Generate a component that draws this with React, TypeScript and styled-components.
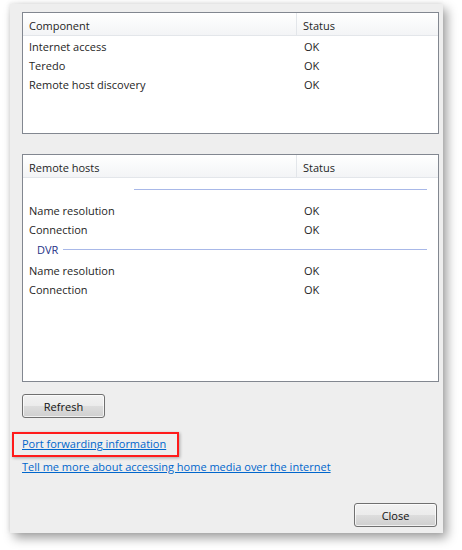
import styled, { createGlobalStyle } from "styled-components";

const GlobalStyle = createGlobalStyle`
  html, body {
    margin: 0;
    padding: 0;
    background: #ffffff;
  }
  body {
    font-family: "Open Sans", "Noto Sans", sans-serif;
    font-size: 11px;
    color: #1e1e1e;
  }
`;

interface Row {
  name: string;
  status: string;
}

const components: Row[] = [
  { name: "Internet access", status: "OK" },
  { name: "Teredo", status: "OK" },
  { name: "Remote host discovery", status: "OK" },
];

const hostGroups: { title: string; rows: Row[] }[] = [
  {
    title: "",
    rows: [
      { name: "Name resolution", status: "OK" },
      { name: "Connection", status: "OK" },
    ],
  },
  {
    title: "DVR",
    rows: [
      { name: "Name resolution", status: "OK" },
      { name: "Connection", status: "OK" },
    ],
  },
];

export default function App() {
  return (
    <>
      <GlobalStyle />
      <Page>
        <Dialog>
          <ListBox $height={122}>
            <Header>
              <HeaderCell $width={274}>Component</HeaderCell>
              <HeaderCell>Status</HeaderCell>
            </Header>
            {components.map((row) => (
              <ItemRow key={row.name}>
                <NameCell>{row.name}</NameCell>
                <StatusCell>{row.status}</StatusCell>
              </ItemRow>
            ))}
          </ListBox>

          <ListBox $height={228} $top={20}>
            <Header>
              <HeaderCell $width={274}>Remote hosts</HeaderCell>
              <HeaderCell>Status</HeaderCell>
            </Header>
            {hostGroups.map((group, i) => (
              <div key={i}>
                <GroupRow $empty={group.title === ""}>
                  {group.title && <GroupTitle>{group.title}</GroupTitle>}
                  <GroupLine />
                </GroupRow>
                {group.rows.map((row) => (
                  <ItemRow key={row.name}>
                    <NameCell>{row.name}</NameCell>
                    <StatusCell>{row.status}</StatusCell>
                  </ItemRow>
                ))}
              </div>
            ))}
          </ListBox>

          <Button $top={12}>Refresh</Button>

          <Links>
            <Highlight>
              <Link href="#">Port forwarding information</Link>
            </Highlight>
            <Link href="#">Tell me more about accessing home media over the internet</Link>
          </Links>

          <Footer>
            <Button>Close</Button>
          </Footer>
        </Dialog>
      </Page>
    </>
  );
}

const Page = styled.div`
  padding: 4px 0 0 10px;
  width: 462px;
  height: 550px;
  box-sizing: border-box;
`;

const Dialog = styled.div`
  width: 433px;
  height: 529px;
  box-sizing: border-box;
  background: #eeeeee;
  padding: 8px 4px 6px 12px;
  display: flex;
  flex-direction: column;
  box-shadow: 4px 5px 10px rgba(0, 0, 0, 0.38), -1px -1px 4px rgba(0, 0, 0, 0.08);
`;

const ListBox = styled.div<{ $height: number; $top?: number }>`
  height: ${(p) => p.$height}px;
  margin-top: ${(p) => p.$top ?? 0}px;
  box-sizing: border-box;
  background: #ffffff;
  border: 1px solid #828790;
  overflow: hidden;
`;

const Header = styled.div`
  display: flex;
  height: 23px;
  box-sizing: border-box;
  border-bottom: 1px solid #e3e6ea;
  background: linear-gradient(#ffffff, #f3f4f6);
`;

const HeaderCell = styled.div<{ $width?: number }>`
  width: ${(p) => (p.$width ? `${p.$width}px` : "auto")};
  flex: ${(p) => (p.$width ? "none" : "1")};
  box-sizing: border-box;
  padding: 2px 0 0 6px;
  display: flex;
  align-items: center;
  border-right: ${(p) => (p.$width ? "1px solid #e3e6ea" : "none")};
  color: #1e1e1e;
`;

const ItemRow = styled.div`
  display: flex;
  height: 19px;
  padding-top: 1px;
  box-sizing: border-box;
  align-items: center;
`;

const NameCell = styled.div`
  width: 275px;
  padding-left: 6px;
  box-sizing: border-box;
`;

const StatusCell = styled.div`
  padding-left: 6px;
`;

const GroupRow = styled.div<{ $empty: boolean }>`
  display: flex;
  align-items: center;
  height: 22px;
  padding: 0 11px 0 ${(p) => (p.$empty ? "111px" : "14px")};
`;

const GroupTitle = styled.span`
  color: #1e3287;
  margin-right: 5px;
`;

const GroupLine = styled.div`
  flex: 1;
  height: 1px;
  background: #a8b8e8;
`;

const Button = styled.button<{ $top?: number }>`
  width: 83px;
  height: 24px;
  margin-top: ${(p) => p.$top ?? 0}px;
  font-family: inherit;
  font-size: 11px;
  color: #111111;
  border: 1px solid #707070;
  border-radius: 3px;
  background: linear-gradient(#f2f2f2 0%, #ebebeb 50%, #dddddd 51%, #cfcfcf 100%);
  box-shadow: inset 0 0 0 1px rgba(255, 255, 255, 0.7);
  padding: 0;
`;

const Links = styled.div`
  display: flex;
  flex-direction: column;
  align-items: flex-start;
  margin-top: 17px;
  gap: 5px;
`;

const Highlight = styled.span`
  position: relative;
  display: inline-block;
  line-height: 18px;

  &::after {
    content: "";
    position: absolute;
    left: -10px;
    top: -3px;
    width: 167px;
    height: 25px;
    box-sizing: border-box;
    border: 2px solid #ff1a1a;
    box-shadow: 1px 1px 3px rgba(0, 0, 0, 0.3);
    pointer-events: none;
  }
`;

const Link = styled.a`
  color: #0066cc;
  text-decoration: underline;
  line-height: 18px;
`;

const Footer = styled.div`
  margin-top: auto;
  display: flex;
  justify-content: flex-end;
  padding-right: 2px;
`;
